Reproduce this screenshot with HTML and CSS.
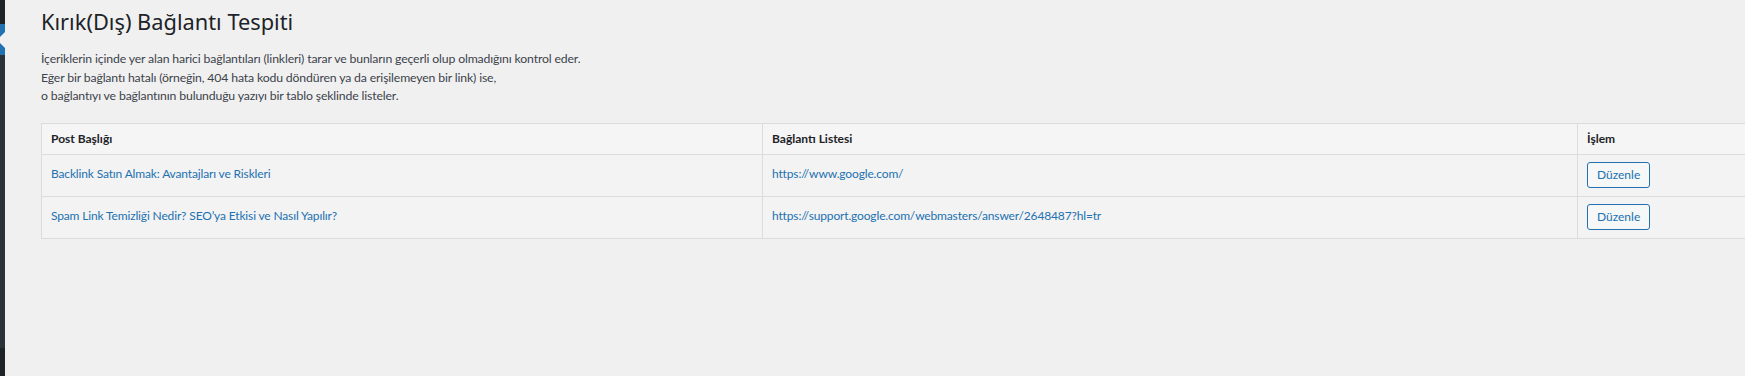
FILE: index.html
```html
<!DOCTYPE html>
<html lang="tr">

<head>
    <meta charset="UTF-8">
    <meta name="viewport" content="width=device-width, initial-scale=1.0">
    <title>Kırık(Dış) Bağlantı Tespiti</title>
    <link rel="stylesheet" href="styles.css">
</head>

<body>
    <div class="sidebar">
        <div class="sidebar-top"></div>
        <div class="sidebar-current"><span class="menu-arrow"></span></div>
        <div class="sidebar-menu"></div>
        <div class="sidebar-bottom"></div>
    </div>
    <div class="wrap">
        <h1 class="page-title">Kırık(Dış) Bağlantı Tespiti</h1>
        <p class="description">
            İçeriklerin içinde yer alan harici bağlantıları (linkleri) tarar ve bunların geçerli olup olmadığını kontrol eder.<br>
            Eğer bir bağlantı hatalı (örneğin, 404 hata kodu döndüren ya da erişilemeyen bir link) ise,<br>
            o bağlantıyı ve bağlantının bulunduğu yazıyı bir tablo şeklinde listeler.
        </p>
        <table class="link-table">
            <colgroup>
                <col class="col-title">
                <col class="col-links">
                <col class="col-action">
            </colgroup>
            <thead>
                <tr>
                    <th>Post Başlığı</th>
                    <th>Bağlantı Listesi</th>
                    <th>İşlem</th>
                </tr>
            </thead>
            <tbody>
                <tr>
                    <td><a href="#">Backlink Satın Almak: Avantajları ve Riskleri</a></td>
                    <td><a href="#">https://www.google.com/</a></td>
                    <td><button class="edit-button">Düzenle</button></td>
                </tr>
                <tr>
                    <td><a href="#">Spam Link Temizliği Nedir? SEO’ya Etkisi ve Nasıl Yapılır?</a></td>
                    <td><a href="#">https://support.google.com/webmasters/answer/2648487?hl=tr</a></td>
                    <td><button class="edit-button">Düzenle</button></td>
                </tr>
            </tbody>
        </table>
    </div>
</body>

</html>
```

FILE: styles.css
```css
body {
    font-family: "Segoe UI", Lato, sans-serif;
    font-size: 12px;
    letter-spacing: -0.15px;
    line-height: 1.4;
    color: #3c434a;
    background-color: #f0f0f1;
    margin: 0;
    height: 100vh;
    display: flex;
    overflow: hidden;
}

.sidebar {
    width: 5px;
    flex-shrink: 0;
    display: flex;
    flex-direction: column;
    background-color: #2c3338;
}

.sidebar-top {
    height: 24px;
    background-color: #1d2327;
}

.sidebar-current {
    height: 31px;
    background-color: #2271b1;
    position: relative;
    overflow: hidden;
}

.menu-arrow {
    position: absolute;
    right: 0;
    top: 8px;
    border: 8px solid transparent;
    border-right-color: #f0f0f1;
}

.sidebar-menu {
    flex: 1;
}

.sidebar-bottom {
    height: 28px;
    background-color: #1d2327;
}

.wrap {
    flex: 1;
    padding: 7px 0 0 36px;
    min-width: 0;
}

.page-title {
    font-family: "Segoe UI", "Noto Sans", sans-serif;
    font-size: 21.8px;
    font-weight: 400;
    letter-spacing: 0;
    line-height: 30px;
    color: #1d2327;
    margin: 0 0 13px;
}

.description {
    font-size: 12.25px;
    margin: 0 0 17px;
    line-height: 18.5px;
}

.link-table {
    width: 1720px;
    table-layout: fixed;
    border-collapse: collapse;
    border: 1px solid #dcdcde;
}

.col-title {
    width: 721px;
}

.col-links {
    width: 815px;
}

.link-table th {
    text-align: left;
    font-weight: 700;
    letter-spacing: 0;
    line-height: 18px;
    color: #1d2327;
    background-color: #f5f5f5;
    padding: 6px 9px;
    border: 1px solid #dcdcde;
}

.link-table td {
    background-color: #f3f3f3;
    padding: 7px 9px 8px;
    border: 1px solid #dcdcde;
    vertical-align: middle;
}

.link-table a {
    color: #2271b1;
    text-decoration: none;
}

.edit-button {
    font-family: inherit;
    font-size: 12px;
    letter-spacing: 0;
    color: #2271b1;
    background-color: #f6f7f7;
    border: 1px solid #2271b1;
    border-radius: 3px;
    height: 26px;
    padding: 0 9px;
    display: block;
}
```
